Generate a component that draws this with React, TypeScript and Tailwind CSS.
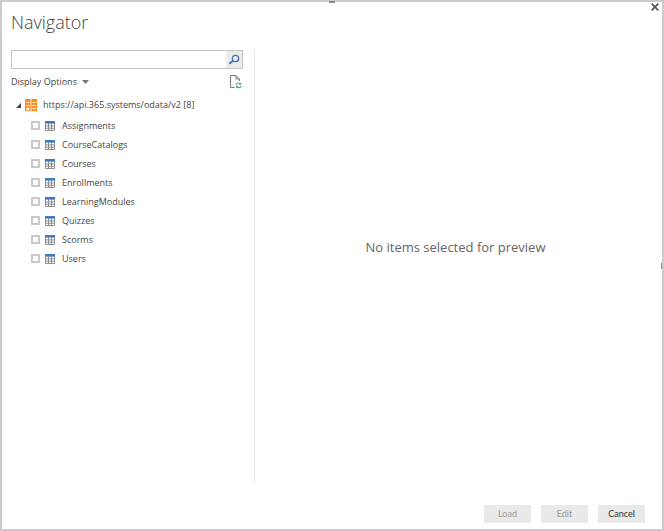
import { useState } from "react";

const tables = [
  "Assignments",
  "CourseCatalogs",
  "Courses",
  "Enrollments",
  "LearningModules",
  "Quizzes",
  "Scorms",
  "Users",
];

const TableIcon = () => (
  <svg width="10" height="10" viewBox="0 0 10 10" fill="none">
    <path
      d="M.5 2v7.500h9V2M.5 4.900h9M.5 7.200h9M3.500 2v7.500M6.500 2v7.500"
      stroke="#858585"
      strokeWidth=".9"
    />
    <rect width="10" height="2.600" fill="#3f7cbd" />
  </svg>
);

const SourceIcon = () => (
  <svg width="12" height="13" viewBox="0 0 12 13">
    <path d="M0 0h5.600v12.300H0zM6.400 0H12v12.300H6.400z" fill="#ff8c1a" />
    <path
      d="M1.500 3.500h3M1.500 6.500h3M7.500 3.500h3.200M7.500 6.500h3.200M7.500 9.500h3.200"
      stroke="#fff"
    />
    <circle cx="2.800" cy="10" r="1.600" fill="#fff" />
  </svg>
);

const SearchIcon = () => (
  <svg width="12" height="12" viewBox="0 0 12 12" fill="none" stroke="#3f74b5">
    <circle cx="7.5" cy="4.5" r="3.2" strokeWidth="1.3" />
    <path d="M5.200 6.800L1.200 9.800" strokeWidth="2" />
  </svg>
);

const RefreshIcon = () => (
  <svg width="12" height="14" viewBox="0 0 12 14" fill="none">
    <path
      d="M4.500 12.500H.5V.5H6L9.500 4v2M6 .5V4h3.500"
      stroke="#7a7a7a"
    />
    <path
      d="M6.200 9.800c.3-2 2.800-2.400 4-.8M11 10.800c-.3 2-2.800 2.400-4 .8"
      stroke="#4da67c"
      strokeWidth="1.1"
    />
    <path d="M11.300 7.200v2.500H8.800zM5.900 13.400v-2.500h2.500z" fill="#4da67c" />
  </svg>
);

const App = () => {
  const [selected, setSelected] = useState<string[]>([]);
  const [open, setOpen] = useState(true);
  const [search, setSearch] = useState("");

  const handleToggle = (name: string) => {
    setSelected(
      selected.includes(name)
        ? selected.filter((item) => item !== name)
        : [...selected, name]
    );
  };

  const renderTables = () =>
    tables
      .filter((name) => name.toLowerCase().includes(search.toLowerCase()))
      .map((name) => (
        <li key={name}>
          <label className="flex h-[19px] items-center">
            <input
              type="checkbox"
              checked={selected.includes(name)}
              onChange={() => handleToggle(name)}
              className="mr-[5px] size-[9px] appearance-none border-2 border-[#cacaca] bg-white checked:bg-[#3f78b8]"
            />
            <TableIcon />
            <span className="ml-[7px]">{name}</span>
          </label>
        </li>
      ));

  return (
    <div className="relative flex min-h-screen flex-col border-2 border-[#cbcbcb] bg-white font-['Open_Sans',sans-serif] text-[9px] text-[#444]">
      {/* resize handles on the window edges */}
      <span className="absolute -top-px left-1/2 h-[2px] w-[6px] -translate-x-1/2 bg-[#8c8c8c]" />
      <span className="absolute top-1/2 right-0 h-[6px] w-px -translate-y-1/2 bg-[#8c8c8c]" />
      <button
        aria-label="Close"
        className="absolute top-0 right-[3px] flex size-[9px] items-center justify-center"
      >
        <svg width="8" height="8" viewBox="0 0 8 8">
          <path d="M.7.7l6.600 6.600M7.300.7L.7 7.300" stroke="#555" strokeWidth="1.700" />
        </svg>
      </button>

      <h1 className="mt-2 ml-[9px] text-[18px] leading-6 font-light text-[#444]">
        Navigator
      </h1>

      <main className="mt-4 flex flex-1">
        <section className="flex w-[253px] shrink-0 flex-col border-r border-[#e8e8e8] pr-[11px] pl-[9px]">
          <div className="flex h-[19px] border border-[#c6c6c6]">
            <input
              type="text"
              aria-label="Search"
              value={search}
              onChange={(e) => setSearch(e.target.value)}
              className="min-w-0 flex-1 px-1 outline-none"
            />
            <button
              aria-label="Run search"
              className="flex w-4 items-center justify-center bg-[#ebebeb]"
            >
              <SearchIcon />
            </button>
          </div>

          <div className="mt-[6px] flex items-center justify-between">
            <button className="flex items-center gap-[5px]">
              Display Options
              <svg width="7" height="4" viewBox="0 0 7 4">
                <path d="M0 0h7L3.500 4z" fill="#777" />
              </svg>
            </button>
            <button aria-label="Refresh" className="mr-px">
              <RefreshIcon />
            </button>
          </div>

          <button
            aria-expanded={open}
            onClick={() => setOpen(!open)}
            className="mt-[6px] ml-[5px] flex h-5 items-center"
          >
            <svg width="5" height="5" viewBox="0 0 5 5">
              <path d="M5 0v5H0z" fill="#444" />
            </svg>
            <span className="mr-[6px] ml-[4px]">
              <SourceIcon />
            </span>
            https://api.365.systems/odata/v2 [8]
          </button>
          {open && <ul className="mt-px ml-5">{renderTables()}</ul>}
        </section>

        <section className="flex flex-1 items-center justify-center pr-[6px] pb-[36px] text-[13px] text-[#666]">
          No items selected for preview
        </section>
      </main>

      <footer className="mt-[23px] mr-[17px] mb-[6px] flex justify-end gap-[10px] font-['Lato',sans-serif] text-[9px]">
        <button disabled className="h-[18px] w-[47px] bg-[#e9e9e9] text-[#999]">
          Load
        </button>
        <button disabled className="h-[18px] w-[47px] bg-[#e9e9e9] text-[#999]">
          Edit
        </button>
        <button className="h-[18px] w-[47px] bg-[#e9e9e9] text-[#333]">
          Cancel
        </button>
      </footer>
    </div>
  );
};

export default App;
